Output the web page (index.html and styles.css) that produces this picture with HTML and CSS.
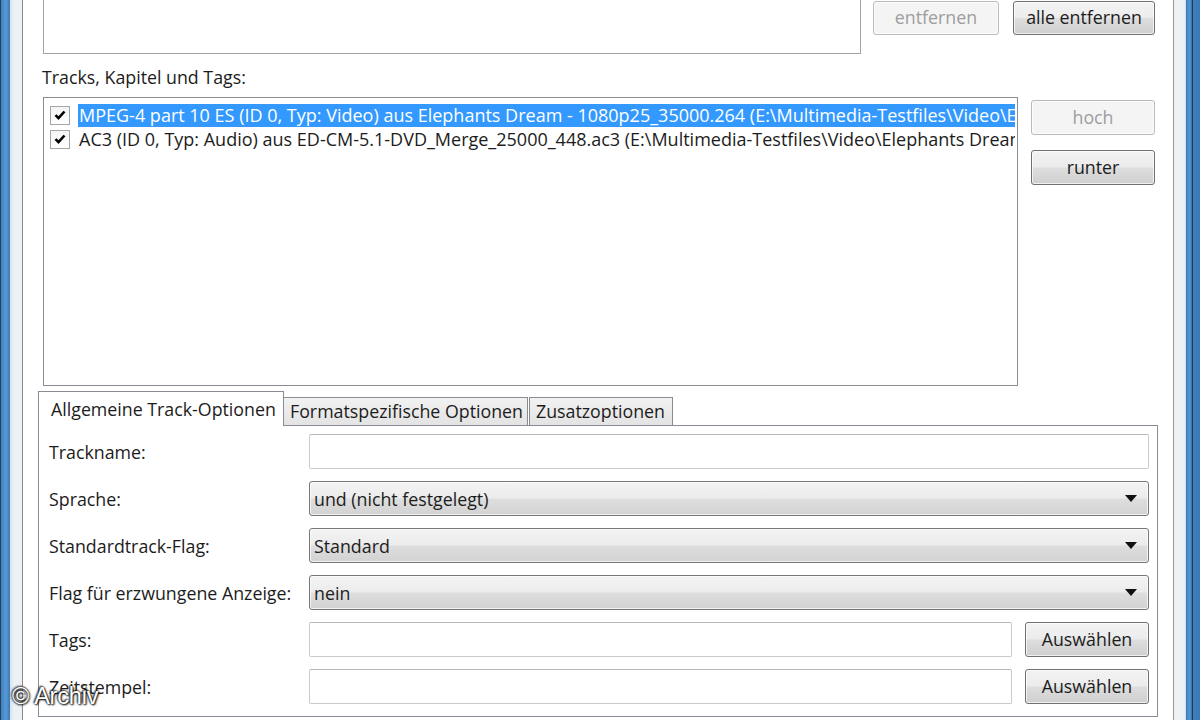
FILE: index.html
```html
<!DOCTYPE html>
<html lang="de">
<head>
<meta charset="utf-8">
<title>mkvmerge</title>
<link rel="stylesheet" href="styles.css">
</head>
<body>
<div class="window">
  <div class="frame frame-left"></div>
  <div class="client">
    <div class="top-row">
      <div class="files-box"></div>
      <div class="top-buttons">
        <button class="btn btn-disabled btn-top">entfernen</button>
        <button class="btn btn-top btn-wide">alle entfernen</button>
      </div>
    </div>
    <div class="section-label">Tracks, Kapitel und Tags:</div>
    <div class="tracks-row">
      <div class="tracks-list">
        <div class="track selected">
          <span class="check"><svg viewBox="0 0 12 12" width="12" height="12"><path d="M1.5 6.2 L4.5 9.2 L10.5 2.5" fill="none" stroke="#000" stroke-width="2.6"/></svg></span>
          <span class="track-text">MPEG-4 part 10 ES (ID 0, Typ: Video) aus Elephants Dream - 1080p25_35000.264 (E:\Multimedia-Testfiles\Video\Elephants Dream\)</span>
        </div>
        <div class="track">
          <span class="check"><svg viewBox="0 0 12 12" width="12" height="12"><path d="M1.5 6.2 L4.5 9.2 L10.5 2.5" fill="none" stroke="#000" stroke-width="2.6"/></svg></span>
          <span class="track-text">AC3 (ID 0, Typ: Audio) aus ED-CM-5.1-DVD_Merge_25000_448.ac3 (E:\Multimedia-Testfiles\Video\Elephants Dream\)</span>
        </div>
      </div>
      <div class="side-buttons">
        <button class="btn btn-disabled btn-side">hoch</button>
        <button class="btn btn-side">runter</button>
      </div>
    </div>
    <div class="tabs">
      <div class="tab active">Allgemeine Track-Optionen</div>
      <div class="tab tab-2">Formatspezifische Optionen</div>
      <div class="tab tab-3">Zusatzoptionen</div>
    </div>
    <div class="panel">
      <div class="form">
        <div class="lbl">Trackname:</div>
        <div class="ctl"><div class="input"></div></div>

        <div class="lbl">Sprache:</div>
        <div class="ctl"><div class="combo"><span>und (nicht festgelegt)</span><i class="arrow"></i></div></div>

        <div class="lbl">Standardtrack-Flag:</div>
        <div class="ctl"><div class="combo"><span>Standard</span><i class="arrow"></i></div></div>

        <div class="lbl">Flag für erzwungene Anzeige:</div>
        <div class="ctl"><div class="combo"><span>nein</span><i class="arrow"></i></div></div>

        <div class="lbl">Tags:</div>
        <div class="ctl split"><div class="input grow"></div><button class="btn btn-pick">Auswählen</button></div>

        <div class="lbl">Zeitstempel:</div>
        <div class="ctl split"><div class="input grow"></div><button class="btn btn-pick">Auswählen</button></div>
      </div>
    </div>
  </div>
  <div class="frame frame-right"></div>
  <div class="watermark">© Archiv</div>
</div>
</body>
</html>
```

FILE: styles.css
```css
* { box-sizing: border-box; }
html, body {
  margin: 0;
  padding: 0;
  width: 1200px;
  height: 720px;
  overflow: hidden;
  background: #fff;
}
body {
  font-family: "Open Sans", "Noto Sans", "Liberation Sans", sans-serif;
  font-size: 17.8px;
  color: #1c1c1c;
}
.window {
  position: relative;
  display: flex;
  width: 1200px;
  height: 720px;
}
.frame-left {
  width: 24px;
  flex: none;
  background: linear-gradient(to right,
    #23405e 0, #23405e 1px,
    #3f7fbd 1px, #5a9ad4 6px, #3a78b6 10px,
    #d6e4f2 10px, #e3ebf3 13px,
    #eef1f4 13px, #eef1f4 22px,
    #8a8a8a 22px, #8a8a8a 23px,
    #fff 23px);
}
.frame-right {
  width: 28px;
  flex: none;
  background: linear-gradient(to right,
    #fff 0, #fff 1px,
    #999 1px, #999 2px,
    #eef1f4 2px, #eef1f4 13px,
    #cfe0f0 13px, #cfe0f0 14px,
    #3f7fbd 14px, #5a98d0 18px, #2f6aa8 20px,
    #1d3b5a 20px, #1d3b5a 21px,
    #3f7fbd 21px, #3a78b6 28px);
}
.client {
  flex: 1;
  display: flex;
  flex-direction: column;
  padding-left: 14px;
}

/* top */
.top-row {
  display: flex;
  height: 54px;
  padding-left: 5px;
}
.files-box {
  width: 818px;
  height: 54px;
  border: 1px solid #a3a3a3;
  border-top: none;
  background: #fff;
}
.top-buttons {
  display: flex;
  gap: 14px;
  margin-left: 12px;
  padding-top: 1px;
}
.btn {
  font-family: inherit;
  font-size: 17.8px;
  color: #1c1c1c;
  border: 1px solid #707070;
  border-radius: 3px;
  background: linear-gradient(to bottom, #f3f3f3 0%, #ececec 48%, #dddddd 52%, #cfcfcf 100%);
  box-shadow: inset 0 0 0 1px rgba(255,255,255,0.7);
  padding: 0;
  line-height: 1;
}
.btn-disabled {
  color: #9d9d9d;
  border-color: #b7bbbf;
  background: #f4f4f4;
}
.btn-top { width: 126px; height: 34px; }
.btn-wide { width: 142px; }

.section-label {
  height: 20px;
  line-height: 20px;
  margin-top: 13px;
  padding-left: 4px;
}

/* tracks */
.tracks-row {
  display: flex;
  margin-top: 10px;
  height: 289px;
  padding-left: 5px;
}
.tracks-list {
  width: 975px;
  height: 289px;
  border: 1px solid #8a8d93;
  background: #fff;
  overflow: hidden;
  padding: 5px 2px 0 6px;
}
.track {
  display: flex;
  align-items: center;
  height: 24px;
  width: 965px;
  overflow: hidden;
  white-space: nowrap;
}
.check {
  flex: none;
  width: 20px;
  height: 19px;
  border: 1px solid #a6a6a6;
  background: linear-gradient(to bottom, #f4f4f4, #fff);
  display: flex;
  align-items: center;
  justify-content: center;
  margin-right: 8px;
}
.track-text {
  display: block;
  flex: 1;
  min-width: 0;
  overflow: hidden;
  font-size: 18px;
  line-height: 23px;
  height: 23px;
  padding-left: 1px;
}
.track.selected .track-text {
  background: #3399ff;
  color: #fff;
}
.side-buttons {
  display: flex;
  flex-direction: column;
  gap: 15px;
  margin-left: 13px;
  padding-top: 3px;
}
.btn-side { width: 124px; height: 35px; }

/* tabs */
.tabs {
  display: flex;
  align-items: flex-end;
  height: 34px;
  margin-top: 5px;
}
.tab {
  height: 28px;
  line-height: 27px;
  border: 1px solid #898c95;
  border-bottom: none;
  background: linear-gradient(to bottom, #f2f2f2, #e3e3e3);
  padding: 0 6px;
  white-space: nowrap;
}
.tab.active {
  height: 35px;
  line-height: 34px;
  width: 246px;
  background: #fff;
  padding-left: 12px;
  position: relative;
  z-index: 1;
  margin-bottom: -1px;
}
.tab-2 { width: 244px; border-left: none; }
.tab-3 { width: 144px; margin-left: 1px; }

.panel {
  width: 1120px;
  height: 292px;
  border: 1px solid #898c95;
  background: #fff;
  padding: 8px 8px 0 10px;
}
.form {
  display: grid;
  grid-template-columns: 260px 1fr;
  grid-auto-rows: 35px;
  row-gap: 12px;
}
.lbl {
  display: flex;
  align-items: center;
  white-space: nowrap;
}
.ctl { display: flex; }
.input {
  width: 100%;
  height: 35px;
  border: 1px solid #c9cbcf;
  border-top-color: #b5b7bb;
  border-radius: 2px;
  background: #fff;
}
.combo {
  width: 100%;
  height: 35px;
  border: 1px solid #777;
  border-radius: 3px;
  background: linear-gradient(to bottom, #f3f3f3 0%, #ececec 48%, #dedede 52%, #d2d2d2 100%);
  box-shadow: inset 0 0 0 1px rgba(255,255,255,0.7);
  display: flex;
  align-items: center;
  padding: 0 8px 0 4px;
}
.combo span { flex: 1; }
.arrow {
  width: 0;
  height: 0;
  border-left: 6px solid transparent;
  border-right: 6px solid transparent;
  border-top: 7px solid #111;
  margin-right: 3px;
}
.split { gap: 13px; }
.grow { flex: 1; width: auto; }
.btn-pick { width: 124px; height: 35px; flex: none; }

.watermark {
  position: absolute;
  left: 12px;
  top: 683px;
  font-family: "Liberation Sans", Arial, sans-serif;
  font-size: 23.5px;
  color: #fff;
  text-shadow: 0 0 2px #000, 1px 1px 2px #000, -1px -1px 2px #333;
  letter-spacing: -0.2px;
}
```
